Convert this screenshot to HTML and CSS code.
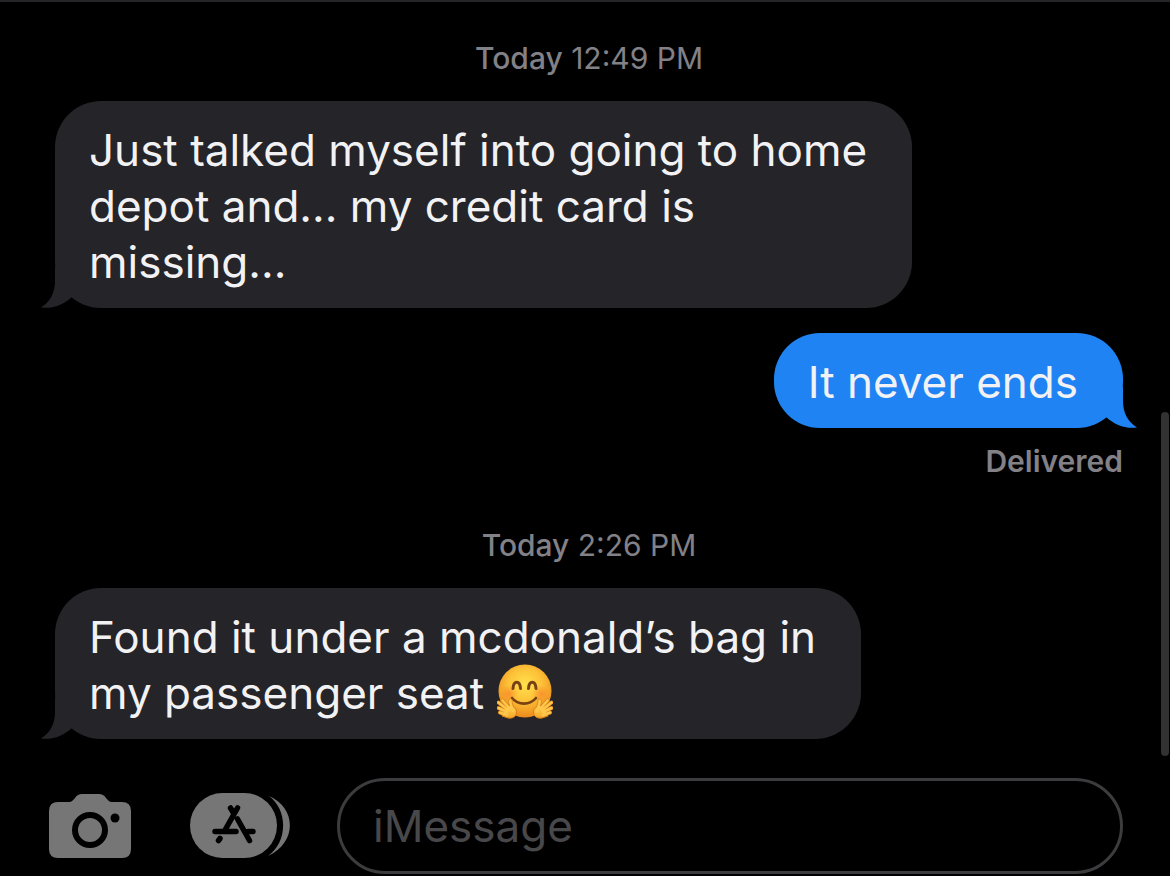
FILE: index.html
```html
<!DOCTYPE html>
<html lang="en">
<head>
    <meta charset="UTF-8">
    <meta name="viewport" content="width=device-width, initial-scale=1.0">
    <title>Messages</title>
    <link rel="stylesheet" href="styles.css">
</head>
<body>
    <main class="thread">
        <div class="timestamp"><strong>Today</strong> 12:49 PM</div>

        <div class="bubble received">
            Just talked myself into going to home<br>
            depot and... my credit card is<br>
            missing...
            <svg class="tail" viewBox="0 0 31 41" aria-hidden="true">
                <path d="M14 0V14C14 25 10 34 0 40.500C12 42 22 38 31 30V0Z"/>
            </svg>
        </div>

        <div class="bubble sent">
            It never ends
            <svg class="tail" viewBox="0 0 31 41" aria-hidden="true">
                <path d="M14 0V14C14 25 10 34 0 40.500C12 42 22 38 31 30V0Z"/>
            </svg>
        </div>
        <div class="receipt">Delivered</div>

        <div class="timestamp"><strong>Today</strong> 2:26 PM</div>

        <div class="bubble received">
            Found it under a mcdonald’s bag in<br>
            my passenger seat
            <svg class="emoji" viewBox="0 0 56 56" role="img" aria-label="Hugging face">
                <defs>
                    <radialGradient id="face" cx="50%" cy="38%" r="62%">
                        <stop offset="0" stop-color="#ffe04d"/>
                        <stop offset="0.5" stop-color="#fdc238"/>
                        <stop offset="1" stop-color="#ec8a1c"/>
                    </radialGradient>
                    <radialGradient id="cheek">
                        <stop offset="0" stop-color="#f9792a" stop-opacity="0.6"/>
                        <stop offset="1" stop-color="#f9792a" stop-opacity="0"/>
                    </radialGradient>
                    <linearGradient id="hand" x1="0" y1="0" x2="0" y2="1">
                        <stop offset="0" stop-color="#ffd451"/>
                        <stop offset="1" stop-color="#f5a72a"/>
                    </linearGradient>
                </defs>
                <circle cx="28" cy="27" r="26.500" fill="url(#face)"/>
                <circle cx="12" cy="30" r="9" fill="url(#cheek)"/>
                <circle cx="44" cy="30" r="9" fill="url(#cheek)"/>
                <path d="M16 24.500C16.500 16 23 16 23.500 24.500M31.500 24.500C32 16 38.500 16 39 24.500" fill="none" stroke="#784215" stroke-width="3" stroke-linecap="round"/>
                <path d="M15 34C21 41.500 33 41.500 39 34" fill="none" stroke="#784215" stroke-width="2.600" stroke-linecap="round"/>
                <g id="palm">
                    <path d="M10 51L3 48.500M10 48L1.500 44M11 46L1.500 38.500M13 45L5.500 36.500M16 47C16 43 12.500 41 13.500 36.500" fill="none" stroke="#d8801c" stroke-width="4" stroke-linecap="round"/>
                    <path d="M8 44L14 41L19 45C21 51 17 55 11 54L5 52Z" fill="url(#hand)" stroke="#d8801c"/>
                    <path d="M10 51L3 48.500M10 48L1.500 44M11 46L1.500 38.500M13 45L5.500 36.500M16 47C16 43 12.500 41 13.500 36.500" fill="none" stroke="#ffc74b" stroke-width="2.600" stroke-linecap="round"/>
                </g>
                <use href="#palm" transform="matrix(-1 0 0 1 56 0)"/>
            </svg>
            <svg class="tail" viewBox="0 0 31 41" aria-hidden="true">
                <path d="M14 0V14C14 25 10 34 0 40.500C12 42 22 38 31 30V0Z"/>
            </svg>
        </div>
    </main>

    <form class="composer">
        <button class="icon-button" type="button" aria-label="Camera">
            <svg width="82" height="64" viewBox="0 0 82 64">
                <path fill="#767676" d="M9 8H20C23 8 24 6 26 4C28 1 30 0 33 0H50C53 0 55 1 57 4C59 6 60 8 63 8H73Q82 8 82 17V55Q82 64 73 64H9Q0 64 0 55V17Q0 8 9 8Z"/>
                <circle cx="41" cy="36" r="15" fill="none" stroke="#000" stroke-width="6"/>
                <circle cx="66" cy="24" r="4.500"/>
            </svg>
        </button>
        <button class="icon-button" type="button" aria-label="Apps">
            <svg width="100" height="66" viewBox="0 0 100 66">
                <path fill="#767676" d="M79 3C107 15 107 50 78 63C98 49 98 17 79 3Z"/>
                <rect width="87" height="65" rx="32.500" fill="#767676"/>
                <path d="M40.500 15L43.500 20M47.500 15L34.500 38M25 38.500H46M58 38.500H63M47.500 26L59.500 47.500M30 45.500L28.500 47.500" fill="none" stroke="#000" stroke-width="5.500" stroke-linecap="round"/>
            </svg>
        </button>
        <input class="message-input" type="text" placeholder="iMessage" aria-label="iMessage">
    </form>

    <div class="scroll-thumb"></div>
</body>
</html>
```
FILE: styles.css
```css
* {
    margin: 0;
    padding: 0;
    box-sizing: border-box;
}

body {
    font-family: Inter, "Liberation Sans", sans-serif;
    font-size: 44px;
    background: #000;
    color: #f2f2f4;
    border-top: 2px solid #252528;
}

.thread {
    display: flex;
    flex-direction: column;
    padding: 38px 47px 0 55px;
}

.timestamp {
    font-size: 30px;
    line-height: 36px;
    text-align: center;
    color: #828187;
    margin-bottom: 25px;
}

.timestamp strong {
    font-weight: 500;
}

.bubble {
    position: relative;
    max-width: 82%;
    padding: 21px 45px 18px 34px;
    border-radius: 46px;
    line-height: 56px;
}

.received {
    align-self: flex-start;
    background: #252429;
    color: #f2f2f4;
}

.sent {
    align-self: flex-end;
    background: #2083f3;
    margin-top: 25px;
}

.tail {
    position: absolute;
    left: -14px;
    bottom: 0;
    width: 31px;
    height: 41px;
    fill: #252429;
}

.sent .tail {
    left: auto;
    right: -14px;
    fill: #2083f3;
    transform: scaleX(-1);
}

.receipt {
    align-self: flex-end;
    font-size: 30px;
    line-height: 36px;
    font-weight: 600;
    color: #828187;
    margin: 15px 0 48px;
}

.emoji {
    width: 56px;
    height: 56px;
    margin: -4px 0;
    vertical-align: -7px;
}

.composer {
    display: flex;
    align-items: center;
    padding: 39px 47px 0 49px;
}

.icon-button {
    display: flex;
    background: none;
    border: none;
    margin-right: 59px;
    cursor: pointer;
}

.icon-button + .message-input {
    margin-left: -12px;
}

.message-input {
    flex: 1;
    min-width: 0;
    height: 96px;
    padding: 0 33px;
    font: inherit;
    color: #f2f2f4;
    background: transparent;
    border: 3px solid #3c3c3e;
    border-radius: 48px;
    outline: none;
}

.message-input::placeholder {
    color: #48484a;
}

.scroll-thumb {
    position: absolute;
    top: 412px;
    right: 1px;
    width: 8px;
    height: 344px;
    border-radius: 4px;
    background: #323232;
}
```
